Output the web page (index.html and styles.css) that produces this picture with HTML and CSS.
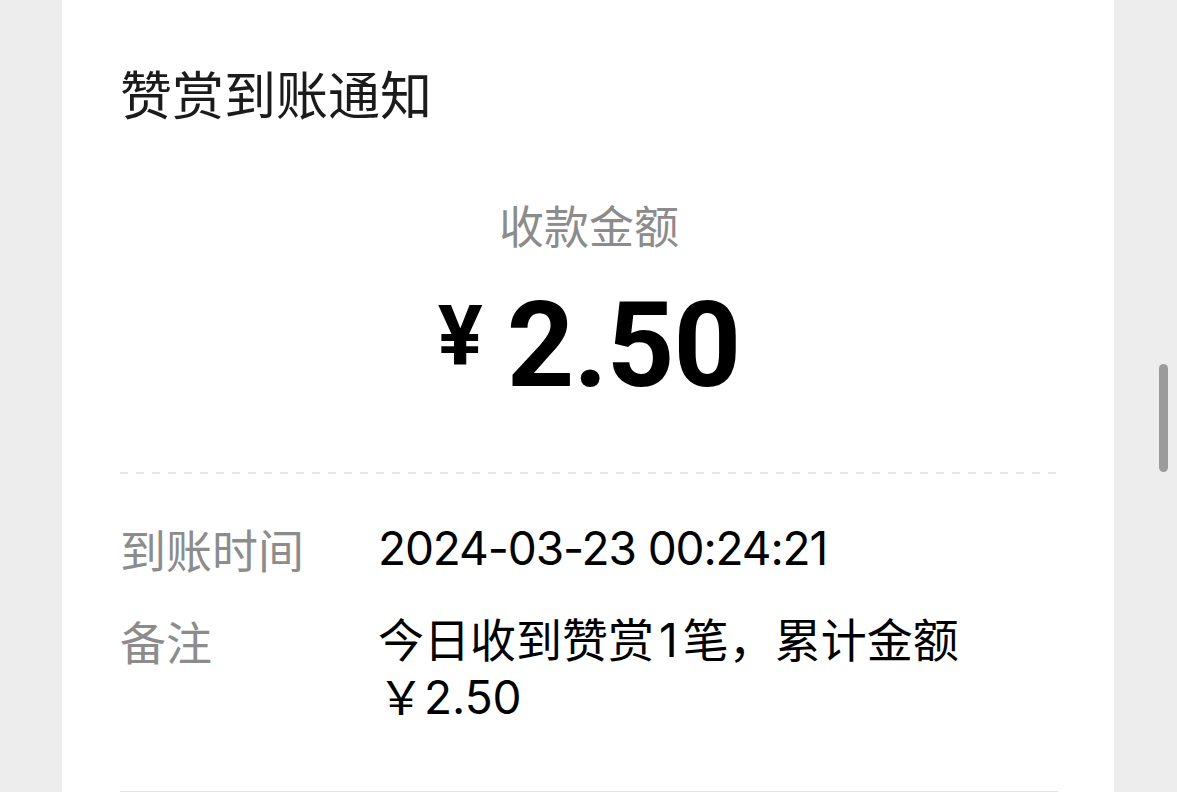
FILE: index.html
```html
<!DOCTYPE html>
<html lang="zh-CN">
<head>
<meta charset="utf-8">
<title>赞赏到账通知</title>
<link rel="stylesheet" href="styles.css">
</head>
<body>
<div class="page">
  <div class="card">
    <h1 class="title">赞赏到账通知</h1>
    <div class="amount-block">
      <div class="amount-label">收款金额</div>
      <div class="amount"><span class="yen">¥</span><span class="num">2.50</span></div>
    </div>
    <div class="dash"></div>
    <div class="rows">
      <div class="row">
        <div class="label">到账时间</div>
        <div class="value"><span class="digits">2024-03-23 00:24:21</span></div>
      </div>
      <div class="row">
        <div class="label">备注</div>
        <div class="value">今日收到赞赏<span class="one">1</span>笔，累计金额<br>￥2.50</div>
      </div>
    </div>
    <div class="bottom-line"></div>
  </div>
  <div class="scrollbar"></div>
</div>
</body>
</html>
```

FILE: styles.css
```css
html, body {
  margin: 0;
  padding: 0;
  background: #ededed;
  height: 100%;
  overflow: hidden;
}
.page {
  padding: 0 63px 0 62px;
  font-family: "Inter", "Noto Sans CJK SC", sans-serif;
}
.card {
  background: #ffffff;
  margin-top: -20px;
  border-radius: 20px;
  padding: 20px 56px 0 58px;
  height: 900px;
  box-sizing: border-box;
}
.title {
  margin: 0;
  padding-top: 58px;
  font-size: 52px;
  line-height: 70px;
  font-weight: 400;
  color: #1b1b1b;
  font-family: "Noto Sans CJK SC", sans-serif;
}
.amount-block {
  display: flex;
  flex-direction: column;
  align-items: center;
  padding-top: 67px;
}
.amount-label {
  font-family: "Noto Sans CJK SC", sans-serif;
  font-size: 45px;
  line-height: 60px;
  color: #8c8c8c;
}
.amount {
  display: flex;
  align-items: center;
  margin-top: 31px;
  font-family: "Roboto", sans-serif;
  font-weight: 700;
  color: #000;
  line-height: 120px;
}
.yen {
  font-size: 84px;
  line-height: 100px;
  margin-right: 24px;
  margin-bottom: 18px;
}
.num {
  font-size: 118px;
  letter-spacing: -1px;
}
.dash {
  margin-top: 66px;
  height: 2px;
  background: repeating-linear-gradient(to right, #e6e6e6 0 8px, transparent 8px 16px);
}
.rows {
  display: flex;
  flex-direction: column;
  gap: 35px;
  padding-top: 46px;
}
.row {
  display: flex;
  font-size: 46px;
  line-height: 57px;
}
.label {
  width: 258px;
  flex-shrink: 0;
  color: #8c8c8c;
  font-family: "Noto Sans CJK SC", sans-serif;
}
.value {
  color: #000;
}
.digits {
  letter-spacing: -1.1px;
}
.one {
  margin: 0 5px;
}
.bottom-line {
  margin-top: 65px;
  border-top: 2px solid #e6e6e6;
}
.scrollbar {
  position: absolute;
  left: 1159px;
  top: 364px;
  width: 9px;
  height: 108px;
  border-radius: 5px;
  background: #9b9b9b;
}
```
